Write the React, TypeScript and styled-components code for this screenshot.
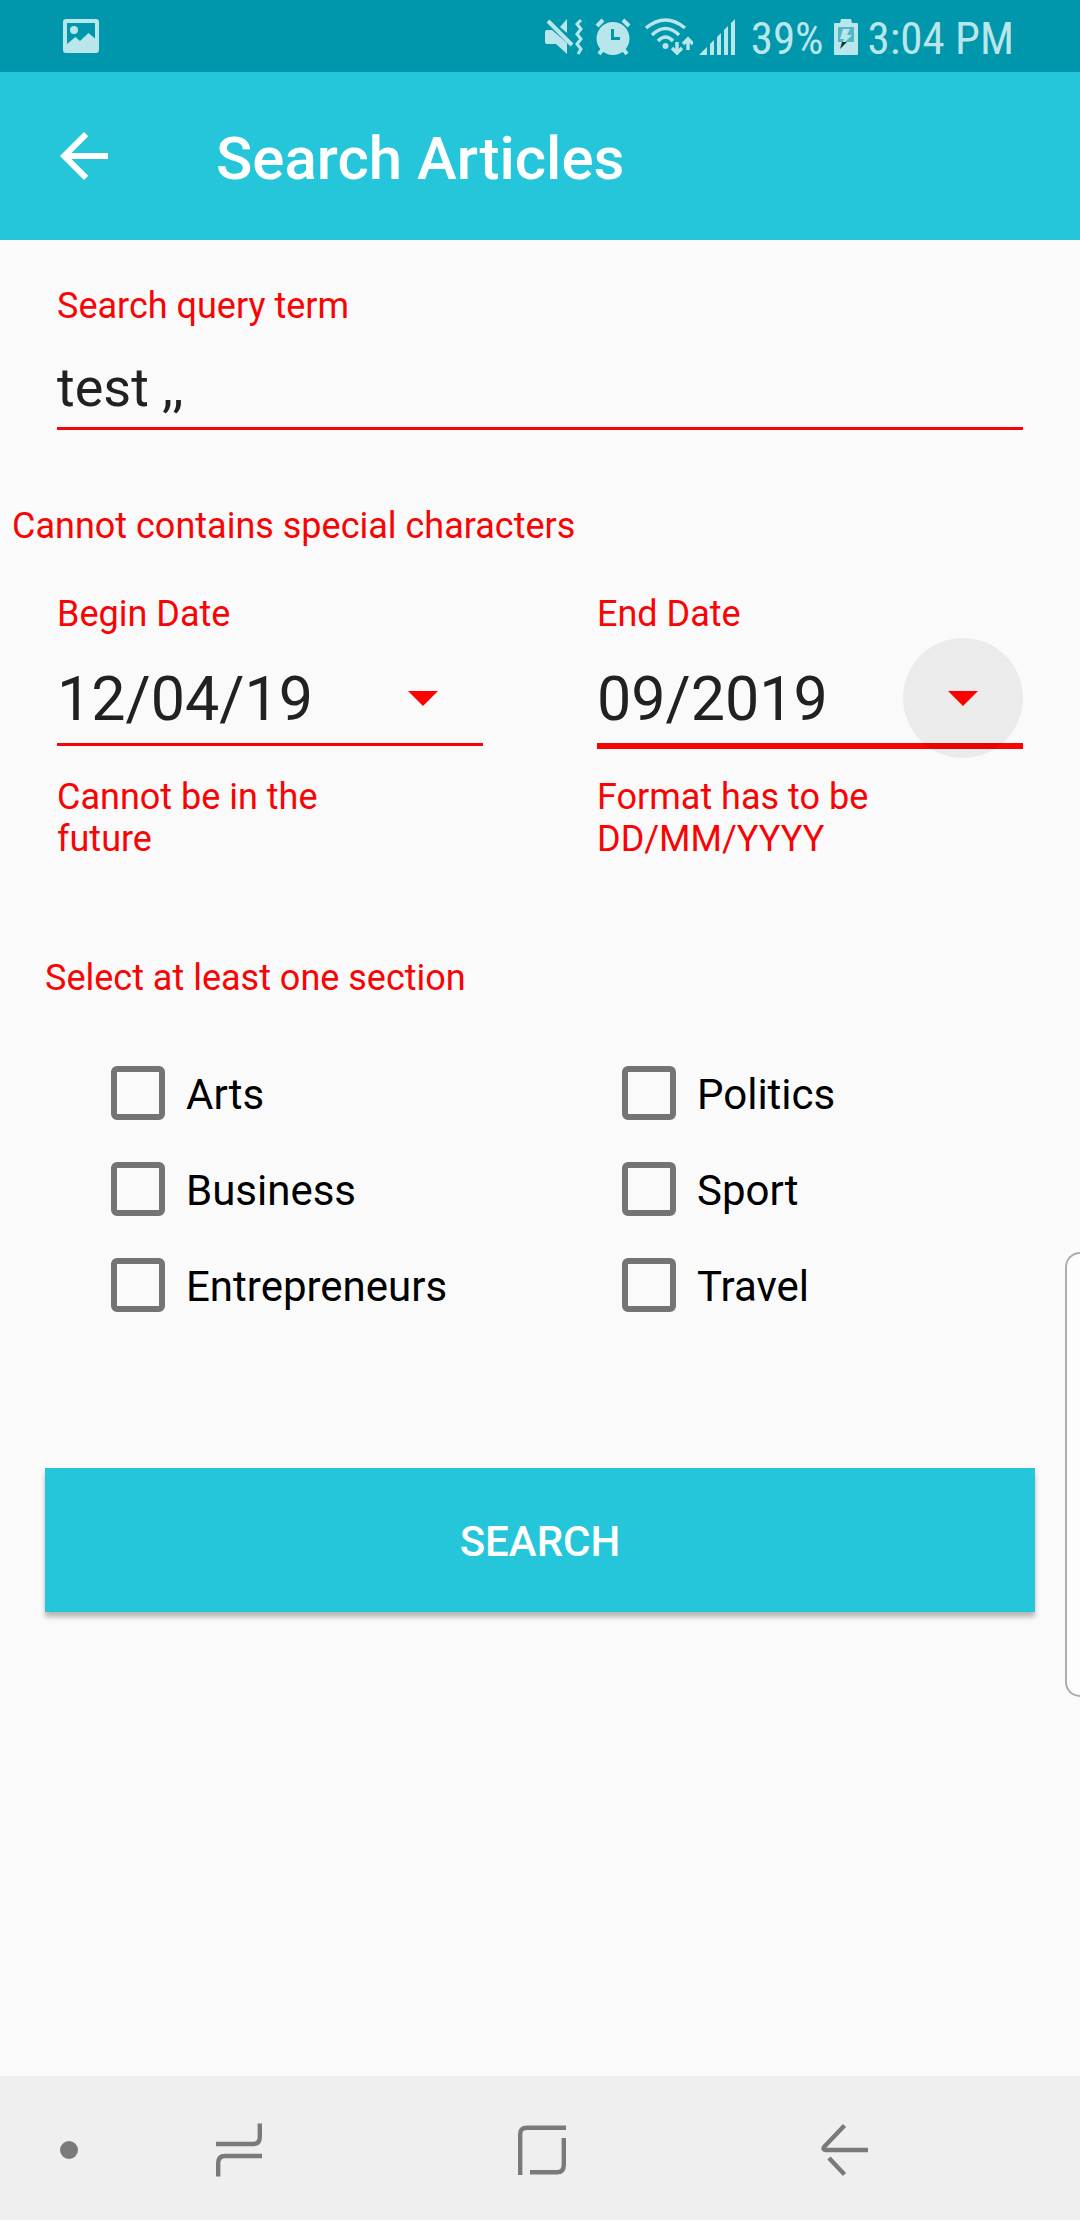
import React, { useState } from "react";
import styled, { createGlobalStyle } from "styled-components";

const red = "#f80404";
const cyan = "#26c6da";
const statusInk = "#b9e6eb";

const GlobalStyle = createGlobalStyle`
  *, *::before, *::after { box-sizing: border-box; }
  body { margin: 0; background: #fafafa; }
  body, button, input { font-family: Roboto, "Noto Sans", sans-serif; }
`;

const Screen = styled.div`
  position: relative;
  display: flex;
  flex-direction: column;
  min-height: 100vh;
  background: #fafafa;
`;

const StatusBar = styled.div`
  display: flex;
  align-items: center;
  justify-content: space-between;
  height: 72px;
  padding: 0 66px 0 63px;
  background: #0097ac;
  color: ${statusInk};

  svg { display: block; fill: currentColor; }
`;

const StatusGroup = styled.div`
  display: flex;
  align-items: center;
  gap: 10px;
  padding-top: 2px;
`;

const StatusIcons = styled.div`
  display: flex;
  align-items: center;
  gap: 6px;
  margin-right: 5px;
`;

const StatusText = styled.span`
  font-family: "Roboto Condensed", Roboto, sans-serif;
  font-size: 45px;
  line-height: 72px;
  padding-top: 4px;
`;

const AppBar = styled.header`
  display: flex;
  align-items: center;
  gap: 96px;
  height: 168px;
  padding: 0 48px;
  background: ${cyan};
  color: #fff;
`;

const BackButton = styled.button`
  display: block;
  padding: 0;
  border: 0;
  background: none;
  color: inherit;

  svg { display: block; fill: currentColor; }
`;

const Title = styled.h1`
  margin: 0;
  padding-top: 6px;
  font-size: 60px;
  font-weight: 500;
  line-height: 70px;
`;

const Form = styled.form`
  flex: 1;
  display: flex;
  flex-direction: column;
  padding: 45px 0;
`;

const Field = styled.div`
  display: flex;
  flex-direction: column;
  min-width: 0;
`;

const QueryField = styled(Field)`
  margin: 0 57px;
`;

const Label = styled.label`
  color: ${red};
  font-size: 36px;
  line-height: 42px;
`;

const TextInput = styled.input`
  width: 100%;
  min-width: 0;
  border: 0;
  border-radius: 0;
  outline: 0;
  background: none;
  color: #212121;
`;

const QueryInput = styled(TextInput)`
  height: 103px;
  padding: 27px 0 7px;
  border-bottom: 3px solid ${red};
  font-size: 54px;
`;

const Message = styled.p<{ $inset: number; $above: number }>`
  margin: ${(p) => p.$above}px ${(p) => p.$inset}px 0;
  color: ${red};
  font-size: 36px;
  line-height: 42px;
`;

const DateFields = styled.div`
  display: grid;
  grid-template-columns: 1fr 1fr;
  gap: 114px;
  margin: 46px 57px 0;
`;

const DateRow = styled.div<{ $focused: boolean }>`
  display: flex;
  align-items: flex-end;
  margin-bottom: ${(p) => (p.$focused ? 0 : 3)}px;
  border-bottom: ${(p) => (p.$focused ? 6 : 3)}px solid ${red};
`;

const DateInput = styled(TextInput)`
  flex: 1;
  height: 79px;
  padding: 0 0 9px;
  font-size: 61px;
`;

const PickerButton = styled.button<{ $pressed: boolean }>`
  display: grid;
  place-items: center;
  flex: none;
  width: 120px;
  height: 120px;
  margin: 3px 0 -15px;
  padding: 0;
  border: 0;
  border-radius: 50%;
  background: ${(p) => (p.$pressed ? "rgba(0, 0, 0, 0.06)" : "transparent")};

  svg { display: block; fill: #f00; }
`;

const Helper = styled.p`
  margin: 27px 120px 0 0;
  color: ${red};
  font-size: 36px;
  line-height: 42px;
`;

const Sections = styled.fieldset`
  display: grid;
  grid-template-columns: 1fr 1fr;
  grid-template-rows: repeat(3, 96px);
  grid-auto-flow: column;
  column-gap: 98px;
  margin: 46px 45px 0 111px;
  padding: 0;
  border: 0;
`;

const Option = styled.label`
  display: flex;
  align-items: center;
  gap: 21px;
  color: #000;
  font-size: 42px;
  line-height: 50px;
`;

const OptionText = styled.span`
  padding-top: 3px;
`;

const CheckBox = styled.input`
  appearance: none;
  flex: none;
  width: 54px;
  height: 54px;
  margin: 0;
  border: 6px solid #747474;
  border-radius: 6px;

  &:checked {
    border-color: ${cyan};
    background: ${cyan};
  }
`;

const SearchButton = styled.button`
  height: 144px;
  margin: 135px 45px 0;
  padding: 3px 0 0;
  border: 0;
  background: ${cyan};
  box-shadow: 0 5px 5px rgba(0, 0, 0, 0.27);
  color: #fff;
  font-size: 42px;
  font-weight: 500;
  line-height: 50px;
`;

const EdgePanel = styled.div`
  position: absolute;
  top: 1252px;
  right: 0;
  width: 15px;
  height: 445px;
  border: 2px solid #adadad;
  border-right: 0;
  border-radius: 20px 0 0 20px;
  background: #fdfdfd;
`;

const NavBar = styled.nav`
  display: grid;
  grid-template-columns: 88px repeat(3, 1fr);
  height: 144px;
  padding: 0 84px 0 0;
  background: #efefef;
  color: #7a7a7a;
`;

const NavButton = styled.button<{ $end?: boolean }>`
  display: flex;
  align-items: center;
  justify-content: ${(p) => (p.$end ? "flex-end" : "center")};
  padding: ${(p) => (p.$end ? "4px 10px 0 0" : "4px 0 0")};
  border: 0;
  background: none;
  color: inherit;

  svg {
    display: block;
    fill: none;
    stroke: currentColor;
    stroke-width: 4.4;
  }
`;

const NavDot = styled.span`
  width: 18px;
  height: 18px;
  border-radius: 50%;
  background: currentColor;
`;

const PictureIcon = () => (
  <svg width="36" height="34" viewBox="0 0 36 34" aria-hidden="true">
    <path
      fillRule="evenodd"
      d="M3 0H33Q36 0 36 3V31Q36 34 33 34H3Q0 34 0 31V3Q0 0 3 0ZM4 4V25L12.500 18L17 22L25.500 14L32 19.500V4Z"
    />
    <circle cx="11" cy="11" r="4" />
  </svg>
);

const MuteIcon = () => (
  <svg width="44" height="38" viewBox="0 0 44 38" aria-hidden="true">
    <path d="M2 12H7L22 25V36L11 26H2Q0 26 0 24V14Q0 12 2 12Z" />
    <path d="M15 9L22 1V15Z" />
    <path d="M3 3L27 27" stroke={statusInk} strokeWidth="4" />
    <path
      d="M36 2L32 6L36 11L32 16L36 21L32 26L36 31L33 36"
      fill="none"
      stroke={statusInk}
      strokeWidth="3"
    />
  </svg>
);

const AlarmIcon = () => (
  <svg width="44" height="38" viewBox="0 0 44 38" aria-hidden="true">
    <path d="M2 8L8 2M34 8L28 2M8 31L4 36M28 31L32 36" stroke={statusInk} strokeWidth="4" />
    <path
      fillRule="evenodd"
      d="M18 4A16.500 16.500 0 1 1 18 37A16.500 16.500 0 1 1 18 4ZM16 11V22H25V19H19V11Z"
    />
  </svg>
);

const WifiIcon = () => (
  <svg width="48" height="38" viewBox="0 0 48 38" aria-hidden="true">
    <g fill="none" stroke={statusInk} strokeWidth="3.400">
      <path d="M1 10Q20.500 -6 40 10" />
      <path d="M7 17Q20.500 4 34 17" />
      <path d="M13 23Q20.500 15 28 23" />
      <path d="M32 24V33M27 30L32 35L37 30M43 32V23M38 26L43 21L48 26" />
    </g>
    <circle cx="20.500" cy="28" r="3" />
  </svg>
);

const SignalIcon = () => (
  <svg width="37" height="38" viewBox="0 0 37 38" aria-hidden="true">
    <path d="M0 37L8 29V37ZM11 37V26L15 22V37ZM18 37V19L22 15V37ZM25 37V12L29 8V37ZM32 37V5L36 1V37Z" />
  </svg>
);

const BatteryIcon = () => (
  <svg width="24" height="36" viewBox="0 0 24 36" aria-hidden="true">
    <path d="M7 0H17L18 4H23Q24 4 24 5V35Q24 36 23 36H1Q0 36 0 35V5Q0 4 1 4H6Z" />
    <path d="M4 8H20V23H4Z" fill="#52b6c5" />
    <path d="M9 10H16L13 16H18L8 26L10 20H6Z" fill={statusInk} />
    <path d="M8 23H13L6 30Z" fill="#17343a" />
  </svg>
);

const ArrowBackIcon = () => (
  <svg width="72" height="72" viewBox="0 0 24 24" aria-hidden="true">
    <path d="M20 11H7.830l5.590-5.590L12 4l-8 8 8 8 1.410-1.410L7.830 13H20v-2z" />
  </svg>
);

const CaretIcon = () => (
  <svg width="30" height="15" viewBox="0 0 30 15" aria-hidden="true">
    <path d="M0 0H30L15 15Z" />
  </svg>
);

const RecentsIcon = () => (
  <svg width="46" height="54" viewBox="0 0 46 54" aria-hidden="true">
    <path d="M0 21H37Q43.800 21 43.800 14V0.500M46 33H9Q2.200 33 2.200 40V53.500" />
  </svg>
);

const HomeIcon = () => (
  <svg width="48" height="50" viewBox="0 0 48 50" aria-hidden="true">
    <path d="M2.200 50V9Q2.200 2.700 9 2.700H48M45.800 13V40Q45.800 47.300 39 47.300H12" />
  </svg>
);

const NavBackIcon = () => (
  <svg width="48" height="54" viewBox="0 0 48 54" aria-hidden="true">
    <path d="M23.500 2.500L3 24Q1.500 27 5 27H47M8 35L23.500 51.500" />
  </svg>
);

type DateFieldProps = {
  id: string;
  label: string;
  initial: string;
  helper: string;
  focused?: boolean;
};

const DateField = ({ id, label, initial, helper, focused = false }: DateFieldProps) => {
  const [value, setValue] = useState(initial);
  return (
    <Field>
      <Label htmlFor={id}>{label}</Label>
      <DateRow $focused={focused}>
        <DateInput
          id={id}
          type="text"
          value={value}
          aria-describedby={`${id}-helper`}
          onChange={(e) => setValue(e.target.value)}
        />
        <PickerButton type="button" $pressed={focused} aria-label={`Pick ${label}`}>
          <CaretIcon />
        </PickerButton>
      </DateRow>
      <Helper id={`${id}-helper`}>{helper}</Helper>
    </Field>
  );
};

const sections = ["Arts", "Business", "Entrepreneurs", "Politics", "Sport", "Travel"];

export default function App() {
  const [query, setQuery] = useState("test ,,");
  return (
    <>
      <GlobalStyle />
      <Screen>
        <StatusBar>
          <PictureIcon />
          <StatusGroup>
            <StatusIcons>
              <MuteIcon />
              <AlarmIcon />
              <WifiIcon />
              <SignalIcon />
            </StatusIcons>
            <StatusText>39%</StatusText>
            <BatteryIcon />
            <StatusText>3:04 PM</StatusText>
          </StatusGroup>
        </StatusBar>
        <AppBar>
          <BackButton type="button" aria-label="Back">
            <ArrowBackIcon />
          </BackButton>
          <Title>Search Articles</Title>
        </AppBar>
        <Form onSubmit={(e) => e.preventDefault()}>
          <QueryField>
            <Label htmlFor="query">Search query term</Label>
            <QueryInput
              id="query"
              type="text"
              value={query}
              aria-describedby="query-error"
              onChange={(e) => setQuery(e.target.value)}
            />
          </QueryField>
          <Message id="query-error" $inset={12} $above={75}>
            Cannot contains special characters
          </Message>
          <DateFields>
            <DateField id="begin" label="Begin Date" initial="12/04/19" helper="Cannot be in the future" />
            <DateField id="end" label="End Date" initial="09/2019" helper="Format has to be DD/MM/YYYY" focused />
          </DateFields>
          <Message id="section-error" $inset={45} $above={97}>
            Select at least one section
          </Message>
          <Sections aria-describedby="section-error">
            {sections.map((name) => (
              <Option key={name}>
                <CheckBox type="checkbox" name="section" value={name} />
                <OptionText>{name}</OptionText>
              </Option>
            ))}
          </Sections>
          <SearchButton type="submit">SEARCH</SearchButton>
        </Form>
        <NavBar>
          <NavButton type="button" $end aria-label="Toggle bar">
            <NavDot />
          </NavButton>
          <NavButton type="button" aria-label="Recents">
            <RecentsIcon />
          </NavButton>
          <NavButton type="button" aria-label="Home">
            <HomeIcon />
          </NavButton>
          <NavButton type="button" aria-label="Back">
            <NavBackIcon />
          </NavButton>
        </NavBar>
        <EdgePanel />
      </Screen>
    </>
  );
}
